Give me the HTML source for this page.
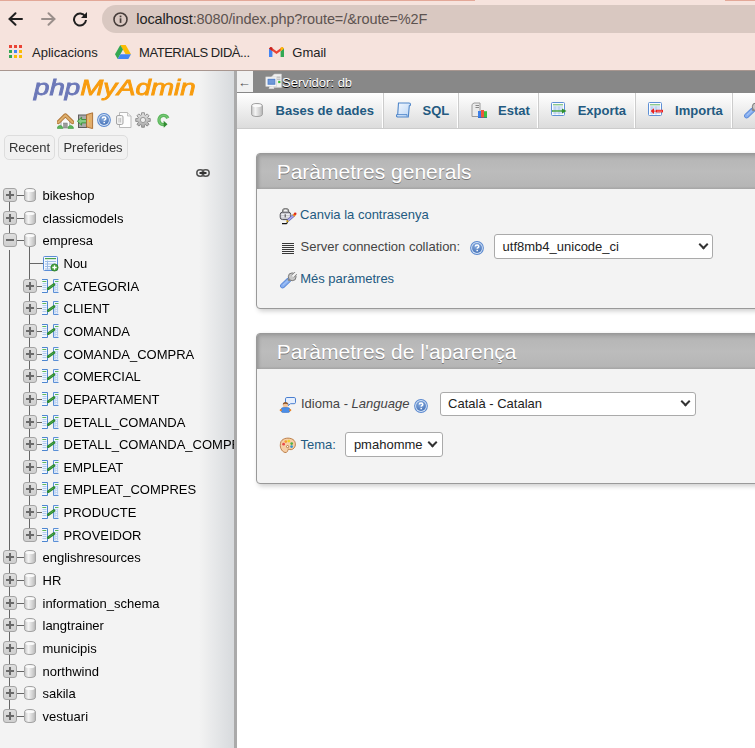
<!DOCTYPE html>
<html><head><meta charset="utf-8">
<style>
*{box-sizing:border-box}
html,body{margin:0;padding:0;width:755px;height:748px;overflow:hidden;background:#fff;font-family:"Liberation Sans",sans-serif}
.a{position:absolute}
#chrome{position:absolute;left:0;top:0;width:755px;height:71px;background:#f6e3dd;border-bottom:1px solid #a8968f}
#omni{position:absolute;left:102px;top:5px;width:680px;height:28px;border-radius:14px;background:#d9c8c1}
.bm{position:absolute;top:44.5px;font-size:13px;color:#222;white-space:nowrap}
#nav{will-change:transform;position:absolute;left:0;top:71px;width:234px;height:677px;background:linear-gradient(to right,#f3f3f3 85%,#d7dadd);overflow:hidden}
#resizer{position:absolute;left:234px;top:71px;width:3px;height:677px;background:#aaa}
.t{position:absolute;font-size:13px;color:#000;white-space:nowrap;line-height:15px}
.lk{color:#235a81}
.exp{position:absolute;width:14px;height:14px;border:1px solid #a4a4a4;border-radius:3px;background:linear-gradient(#dedede,#cfcfcf)}
.exp:before{content:"";position:absolute;left:2px;top:5px;width:8px;height:2px;background:#6a6a6a}
.exp.p:after{content:"";position:absolute;left:5px;top:2px;width:2px;height:8px;background:#6a6a6a}
.vl{position:absolute;width:1px;background:#666}
.hl{position:absolute;height:1px;background:#666}
#main{position:absolute;left:237px;top:71px;width:518px;height:677px;background:#fff;overflow:hidden}
.btn{position:absolute;height:25px;border:1px solid #ddd;border-radius:5px;background:#f1f1f1;font-size:13px;line-height:15px;padding-top:3.6px;text-align:center;color:#333;white-space:nowrap}
.tab{position:absolute;top:32.1px;font-size:13px;line-height:15px;font-weight:700;color:#235a81;white-space:nowrap}
.grp{position:absolute;width:600px;border:1px solid #999;border-radius:4px;background:#f3f3f3;box-shadow:2px 2px 5px #ccc;overflow:hidden}
.gh{height:35px;background:linear-gradient(#a9a9a9,#b7b7b7 18%,#bcbcbc 50%,#b6b6b6 92%,#a8a8a8);box-shadow:inset 2px 1px 3px #999;color:#fff;font-size:21px;line-height:24px;padding:6.3px 0 0 19.7px;text-shadow:0 1px 0 #777;white-space:nowrap}
.sel{position:absolute;border:1px solid #aaa;border-radius:3px;background:#fff;font-size:13px;line-height:15px;color:#222;white-space:nowrap}
.sel span{position:absolute;left:7.6px;top:3.4px}
.sel i{position:absolute;right:4px;top:8.5px;width:10px;height:6px}
.sel i:before{content:"";position:absolute;left:1.5px;top:-3px;width:5px;height:5px;border-right:2px solid #333;border-bottom:2px solid #333;transform:rotate(45deg)}

</style></head><body>
<svg width="0" height="0" style="position:absolute">
<defs>
<linearGradient id="dbg" x1="0" x2="1" y1="0" y2="0"><stop offset="0" stop-color="#c8c8c8"/><stop offset="0.35" stop-color="#f4f4f4"/><stop offset="1" stop-color="#b9b9b9"/></linearGradient>
<symbol id="dbicon" viewBox="0 0 12 14"><path d="M0.6 2.6C0.6 1.3 3 0.5 6 0.5s5.4 0.8 5.4 2.1v8.8c0 1.3-2.4 2.1-5.4 2.1s-5.4-0.8-5.4-2.1z" fill="url(#dbg)" stroke="#a0a0a0" stroke-width="1"/><ellipse cx="6" cy="2.7" rx="4.6" ry="1.4" fill="#fafafa"/></symbol>
<symbol id="tblicon" viewBox="0 0 17 14">
 <path d="M0.5 4.2v8.5" stroke="#b4cdef" stroke-width="1"/>
 <path d="M0 0.5h5.5v13H0" fill="#f4f8fe" stroke="#4d86d0" stroke-width="1"/>
 <path d="M16.5 0.5h-5v13h5" fill="#eef4fd" stroke="#5a8fd6" stroke-width="1"/>
 <rect x="0.3" y="2" width="4" height="1" fill="#5cb85c"/><rect x="13" y="2" width="3.5" height="1" fill="#5cb85c"/>
 <path d="M0.5 4.6h4M0.5 6.6h4M0.5 8.6h4M0.5 10.6h4" stroke="#a9c5ec" stroke-width="1"/>
 <rect x="12.3" y="4" width="3.8" height="8.5" fill="#b9d0ef"/>
 <path d="M13.6 5.3h1.3M13.6 7.3h1.3M13.6 9.3h1.3M13.6 11.3h1.3" stroke="#fff" stroke-width="1"/>
 <path d="M6.3 9.6l5.6-4" stroke="#2d8a2d" stroke-width="2.8" stroke-linecap="round"/>
 <path d="M6.8 9.2l4.6-3.3" stroke="#6cc06c" stroke-width="0.6"/>
</symbol>
<symbol id="newicon" viewBox="0 0 17 16">
 <rect x="1.5" y="0.5" width="14" height="14" rx="1" fill="#f3f7fd" stroke="#5b8dd6" stroke-width="1"/>
 <rect x="3" y="2" width="11" height="1.2" fill="#4aa34a"/>
 <path d="M3 5.5h11M3 8h11M3 10.5h11M3 13h8M5.5 4.5v9" stroke="#9dbce8" stroke-width="1"/>
 <circle cx="12.5" cy="11.5" r="3.6" fill="#46a23c" stroke="#2a7a22" stroke-width="0.7"/><path d="M12.5 9.3v4.4M10.3 11.5h4.4" stroke="#fff" stroke-width="1.3"/>
</symbol>
</defs></svg>
<svg width="0" height="0" style="position:absolute">
<defs>
<linearGradient id="sqlg" x1="0" y1="0" x2="1" y2="1"><stop offset="0" stop-color="#f5f9ff"/><stop offset="1" stop-color="#b8d4f5"/></linearGradient>
<symbol id="ti_db" viewBox="0 0 16 16"><g transform="translate(2,1)"><path d="M0.6 2.6C0.6 1.3 3 0.5 6 0.5s5.4 0.8 5.4 2.1v8.8c0 1.3-2.4 2.1-5.4 2.1s-5.4-0.8-5.4-2.1z" fill="url(#dbg)" stroke="#a0a0a0" stroke-width="1"/><ellipse cx="6" cy="2.7" rx="4.6" ry="1.4" fill="#fafafa"/></g></symbol>
<symbol id="ti_sql" viewBox="0 0 16 16">
 <path d="M2.5 1h10.5c1 0 1.5.6 1.5 1.4 0 .8-.6 1.3-1.2 1.3L12.3 15H2c-1 0-1.6-.6-1.6-1.3 0-.6.5-1.2 1.3-1.2z" fill="url(#sqlg)" stroke="#4f86c9" stroke-width="1.1"/>
 <path d="M1.5 12.6h9.5v1.8" fill="none" stroke="#4f86c9" stroke-width="0.9"/>
</symbol>
<symbol id="ti_stat" viewBox="0 0 16 16">
 <path d="M1 2.5l2-1.5h6v12.5l-2 1H1z" fill="#eaeaea" stroke="#9a9a9a" stroke-width="1"/>
 <rect x="4.5" y="3" width="3.5" height="1" fill="#888"/><rect x="4.5" y="5" width="3.5" height="1" fill="#888"/>
 <rect x="7" y="9" width="3" height="7" fill="#3b7ee8"/><rect x="10" y="8" width="3" height="8" fill="#f0563a"/><rect x="13" y="9.2" width="3" height="6.8" fill="#3fbf3f"/><rect x="7" y="15.2" width="9" height="0.8" fill="#1f5fb0" opacity="0.6"/>
</symbol>
<symbol id="ti_exp" viewBox="0 0 16 16">
 <rect x="0.5" y="0.5" width="13" height="13" rx="1" fill="#fafcff" stroke="#5e90d6" stroke-width="1"/>
 <rect x="2" y="2.3" width="10" height="1" fill="#5fb35f"/>
 <path d="M2 5h10M2 7h10M2 11h10M4 4.5v8M8 4.5v8" stroke="#a7c3ea" stroke-width="0.9"/>
 <path d="M1 8.3h10v-1.8l4.5 2.5-4.5 2.5v-1.8H1z" fill="#2f8f2f"/>
 <rect x="2" y="8.7" width="8" height="0.7" fill="#8fd08f"/>
</symbol>
<symbol id="ti_imp" viewBox="0 0 16 16">
 <rect x="0.5" y="0.5" width="13" height="13" rx="1" fill="#fafcff" stroke="#5e90d6" stroke-width="1"/>
 <rect x="2" y="2.3" width="10" height="1" fill="#5fb35f"/>
 <path d="M2 5h10M2 7h10M2 11h10M4 4.5v8M8 4.5v8" stroke="#a7c3ea" stroke-width="0.9"/>
 <rect x="8" y="7.8" width="7" height="2.6" fill="#e82020"/>
 <path d="M2.5 9.1L6 6.3v5.6z" fill="#e82020"/><rect x="5" y="8.6" width="4" height="1" fill="#e82020"/>
 <rect x="9" y="8.7" width="5" height="0.8" fill="#ff9a9a"/>
</symbol>
<symbol id="ti_wr" viewBox="0 0 16 16">
 <path d="M1.5 12.5l6-6 2 2-6 6c-.8.8-1.3.8-2 .1s-.8-1.3 0-2.1z" fill="#6d9ee8" stroke="#4e84d8" stroke-width="0.8"/>
 <path d="M8 6.5c-1-2 0-5 3-5.5l-1.5 2.2 1.2 1.8 2.2-.2 1.2-2c.8 3-1.5 5.5-4.4 5" fill="#ccc" stroke="#777" stroke-width="0.8"/>
</symbol>
</defs></svg>
<svg width="0" height="0" style="position:absolute">
<defs>
<radialGradient id="hg2" cx="0.45" cy="0.3" r="0.8"><stop offset="0" stop-color="#8db0e2"/><stop offset="1" stop-color="#3f6cb2"/></radialGradient>
<symbol id="helpicon" viewBox="0 0 14 14">
 <circle cx="7" cy="7" r="6.9" fill="#5a88cf"/>
 <circle cx="7" cy="7" r="5.9" fill="#d3e2f6"/>
 <circle cx="7" cy="7" r="4.9" fill="url(#hg2)"/>
 <path d="M5.3 5.5c0-1 .8-1.6 1.75-1.6s1.75.6 1.75 1.5c0 1.15-1.55 1.15-1.55 2.3" fill="none" stroke="#fff" stroke-width="1.45"/>
 <rect x="6.45" y="8.9" width="1.5" height="1.35" fill="#fff"/>
</symbol>
<symbol id="ti_wr2" viewBox="0 0 17 17">
 <path d="M2.6 13.8L8.6 8.2" stroke="#5a88d6" stroke-width="5" stroke-linecap="round"/>
 <path d="M2.6 13.8L8.6 8.2" stroke="#86aef0" stroke-width="3.4" stroke-linecap="round"/>
 <path d="M3.2 13L8 8.6" stroke="#b8d0f6" stroke-width="0.8" stroke-linecap="round"/>
 <path d="M8.2 8.6L10.6 6.2" stroke="#8a8a8a" stroke-width="2.6"/>
 <circle cx="12.2" cy="4.8" r="3.9" fill="#c8c8c8" stroke="#7a7a7a" stroke-width="1"/>
 <path d="M12.6 4.4L17 0" stroke="#7a7a7a" stroke-width="3.6"/>
 <path d="M12.4 4.6L17.5 -0.5" stroke="#f3f3f3" stroke-width="2.2"/>
</symbol>
</defs></svg>

<div id="chrome">
  <div class="a" style="left:0;top:0;width:475px;height:1px;background:#e3a898"></div>
  <div class="a" style="left:725px;top:0;width:30px;height:1px;background:#e3a898"></div>
  <!-- back -->
  <svg class="a" style="left:7.2px;top:11px" width="16" height="16" viewBox="0 0 16 16"><path d="M15 8H2.5M8.5 2.2L2.5 8l6 5.8" fill="none" stroke="#1f1f1f" stroke-width="2" stroke-linecap="round"/></svg>
  <svg class="a" style="left:40.8px;top:11px" width="16" height="16" viewBox="0 0 16 16"><path d="M1 8h12.5M7.5 2.2l6 5.8-6 5.8" fill="none" stroke="#9a8f8b" stroke-width="2" stroke-linecap="round"/></svg>
  <svg class="a" style="left:72px;top:11px" width="16" height="16" viewBox="0 0 16 16"><path d="M13.2 5.5A6 6 0 1 0 14 9" fill="none" stroke="#1f1f1f" stroke-width="2"/><path d="M15 1v6H9z" fill="#1f1f1f"/></svg>
  <div id="omni">
    <svg class="a" style="left:11px;top:7px" width="15" height="15" viewBox="0 0 15 15"><circle cx="7.5" cy="7.5" r="6.5" fill="none" stroke="#463d3a" stroke-width="1.6"/><rect x="6.7" y="6.3" width="1.7" height="4.6" fill="#463d3a"/><rect x="6.7" y="3.6" width="1.7" height="1.7" fill="#463d3a"/></svg>
    <div class="a" style="left:34.3px;top:5.8px;font-size:14.5px;line-height:16px;color:#1f1f1f;white-space:nowrap;letter-spacing:-0.1px">localhost<span style="color:#5d5350">:8080/index.php?route=/&amp;route=%2F</span></div>
  </div>
  <!-- apps grid -->
  <svg class="a" style="left:9px;top:45px" width="13" height="13" viewBox="0 0 13 13">
    <rect x="0" y="0" width="3" height="3" fill="#ea4335"/><rect x="5" y="0" width="3" height="3" fill="#ea4335"/><rect x="10" y="0" width="3" height="3" fill="#ea4335"/>
    <rect x="0" y="5" width="3" height="3" fill="#34a853"/><rect x="5" y="5" width="3" height="3" fill="#4285f4"/><rect x="10" y="5" width="3" height="3" fill="#fbbc04"/>
    <rect x="0" y="10" width="3" height="3" fill="#34a853"/><rect x="5" y="10" width="3" height="3" fill="#fbbc04"/><rect x="10" y="10" width="3" height="3" fill="#fbbc04"/>
  </svg>
  <div class="bm" style="left:32px">Aplicacions</div>
  <svg class="a" style="left:115px;top:45px" width="16" height="14" viewBox="0 0 16 14"><path d="M5.3 0h5.4L16 9.2h-5.4z" fill="#fbbc04"/><path d="M5.3 0L0 9.2l2.7 4.8L8 4.6z" fill="#34a853"/><path d="M2.7 14h10.6L16 9.2H5.4z" fill="#4285f4"/></svg>
  <div class="bm" style="left:139px;letter-spacing:-0.45px">MATERIALS DIDÀ...</div>
  <svg class="a" style="left:269px;top:46.8px" width="15" height="11" viewBox="0 0 15 11"><path d="M0 1.5v8.5h3.4V4.2z" fill="#4285f4"/><path d="M11.6 4.2V10H15V1.5z" fill="#34a853"/><path d="M0 1.5L7.5 7 15 1.5 13.3 0 7.5 4.3 1.7 0z" fill="#ea4335"/><path d="M15 1.5L11.6 4.2V0.6l1.7-.6z" fill="#fbbc04"/><path d="M0 1.5l3.4 2.7V0.6L1.7 0z" fill="#c5221f"/></svg>
  <div class="bm" style="left:292.3px">Gmail</div>
</div>

<div id="nav">
<div class="a" style="left:33.5px;top:3.2px;font-size:22.6px;line-height:28px;font-weight:400;font-style:italic;-webkit-text-stroke:0.85px currentColor;white-space:nowrap;transform:scaleX(1.225);transform-origin:0 0"><span style="color:#6c78b8">php</span><span style="color:#f89c0e">MyAdmin</span></div>
<!-- home -->
<svg class="a" style="left:57px;top:41.5px" width="17" height="16" viewBox="0 0 17 16">
 <rect x="3.6" y="7.5" width="9.6" height="7.5" fill="#fcfcfc"/>
 <path d="M4 8v7M12.8 8v7" stroke="#9a9a9a" stroke-width="0.9"/>
 <rect x="6.6" y="10" width="3.6" height="5" fill="#9c9c9c" stroke="#777" stroke-width="0.5"/>
 <path d="M1.3 9.2L8.4 2.2l7.1 7" fill="none" stroke="#b07434" stroke-width="3.8" stroke-linecap="round" stroke-linejoin="round"/>
 <path d="M1.3 9.2L8.4 2.2l7.1 7" fill="none" stroke="#dcae6c" stroke-width="2" stroke-linecap="round" stroke-linejoin="round"/>
 <path d="M0.3 15.4c0-1.8 1.2-2.8 2.8-2.8s2.6 1 2.8 2.8z" fill="#5cb85c" stroke="#3a903a" stroke-width="0.6"/>
 <path d="M10.9 15.4c0-1.8 1.2-2.8 2.8-2.8s2.6 1 2.8 2.8z" fill="#5cb85c" stroke="#3a903a" stroke-width="0.6"/>
</svg>
<!-- exit -->
<svg class="a" style="left:77px;top:41px" width="17" height="17" viewBox="0 0 17 17">
 <rect x="1.5" y="3" width="8" height="12.5" fill="#aaaaaa" stroke="#5e5e5e" stroke-width="1"/>
 <path d="M0.4 9.2L4.6 5.2v2.3h5v3.4h-5v2.3z" fill="#86cc86" stroke="#2a8a2a" stroke-width="0.8"/>
 <path d="M9.6 2.6L15.6 0.8v15.8l-6-1.6z" fill="#e2ad6c" stroke="#a96a2b" stroke-width="0.9"/>
 <path d="M11 4v9.6" stroke="#f3d2a0" stroke-width="0.6"/>
 <circle cx="12.6" cy="9" r="0.8" fill="#ffd600"/>
</svg>
<!-- help -->
<svg class="a" style="left:97px;top:42px" width="14" height="14"><use href="#helpicon"/></svg>
<!-- docs -->
<svg class="a" style="left:116px;top:41px" width="16" height="16" viewBox="0 0 16 16">
 <path d="M3.5 0.5h8l3.5 3.5v11.5h-11.5z" fill="#fdfdfd" stroke="#b9b9b9" stroke-width="1"/>
 <path d="M11.5 0.5v3.5h3.5" fill="#eee" stroke="#b9b9b9" stroke-width="0.8"/>
 <rect x="0.5" y="3.5" width="6.5" height="9" rx="1.5" fill="#f2f2f2" stroke="#a5a5a5" stroke-width="1"/>
 <path d="M3 6v4.5M4.6 6v4.5" stroke="#c2c2c2" stroke-width="1"/>
</svg>
<!-- gear -->
<svg class="a" style="left:135px;top:41px" width="16" height="16" viewBox="0 0 16 16">
 <defs><linearGradient id="gg" x1="0" y1="0" x2="0" y2="1"><stop offset="0" stop-color="#e4e4e4"/><stop offset="1" stop-color="#a8a8a8"/></linearGradient></defs>
 <path d="M13.22 6.60 L15.26 6.59 L15.26 9.41 L13.22 9.40 L12.68 10.70 L14.13 12.14 L12.14 14.13 L10.70 12.68 L9.40 13.22 L9.41 15.26 L6.59 15.26 L6.60 13.22 L5.30 12.68 L3.86 14.13 L1.87 12.14 L3.32 10.70 L2.78 9.40 L0.74 9.41 L0.74 6.59 L2.78 6.60 L3.32 5.30 L1.87 3.86 L3.86 1.87 L5.30 3.32 L6.60 2.78 L6.59 0.74 L9.41 0.74 L9.40 2.78 L10.70 3.32 L12.14 1.87 L14.13 3.86 L12.68 5.30Z" fill="url(#gg)" stroke="#7c7c7c" stroke-width="0.8" stroke-linejoin="round"/>
 <circle cx="8" cy="8" r="2.6" fill="#eeeeee" stroke="#8a8a8a" stroke-width="0.8"/>
</svg>
<!-- reload -->
<svg class="a" style="left:156px;top:113px;top:42px" width="14" height="15" viewBox="0 0 14 15">
 <path d="M11.8 5.2A4.6 4.6 0 1 0 8.2 11.6" fill="none" stroke="#5cb85c" stroke-width="3.4"/>
 <path d="M11.8 5.2A4.6 4.6 0 1 0 8.2 11.6" fill="none" stroke="#8fd08f" stroke-width="1" opacity="0.6"/>
 <path d="M7.6 7.8L11.5 11.2 7.8 14.8z" fill="#2f8a2f"/>
</svg>
<div class="a btn" style="left:4px;top:64px;width:51px">Recent</div>
<div class="a btn" style="left:58px;top:64px;width:70px">Preferides</div>
<!-- link -->
<svg class="a" style="left:196px;top:98px" width="14" height="8" viewBox="0 0 14 8">
 <rect x="0.8" y="0.8" width="7" height="6.4" rx="3.2" fill="none" stroke="#555" stroke-width="1.5"/>
 <rect x="6.2" y="0.8" width="7" height="6.4" rx="3.2" fill="none" stroke="#555" stroke-width="1.5"/>
 <rect x="3.5" y="3" width="7" height="2" fill="#333"/>
</svg>

<div class="vl" style="left:29px;top:176.3px;height:280.45px"></div>
<div class="vl" style="left:9px;top:179.3px;height:458.65px"></div>
<div class="vl" style="left:9px;top:131.0px;height:31.3px"></div>
<div class="exp p" style="left:3px;top:117.0px"></div>
<div class="hl" style="left:17px;top:124.0px;width:7px"></div>
<svg class="a dbi" style="left:24px;top:117.0px" width="12" height="14"><use href="#dbicon"/></svg>
<div class="t" style="left:42.5px;top:117.0px">bikeshop</div>
<div class="exp p" style="left:3px;top:139.65px"></div>
<div class="hl" style="left:17px;top:146.65px;width:7px"></div>
<svg class="a dbi" style="left:24px;top:139.65px" width="12" height="14"><use href="#dbicon"/></svg>
<div class="t" style="left:42.5px;top:139.65px">classicmodels</div>
<div class="exp" style="left:3px;top:162.3px"></div>
<div class="hl" style="left:17px;top:169.3px;width:7px"></div>
<svg class="a dbi" style="left:24px;top:162.3px" width="12" height="14"><use href="#dbicon"/></svg>
<div class="t" style="left:42.5px;top:162.3px">empresa</div>
<div class="hl" style="left:29px;top:192.45px;width:14px"></div>
<svg class="a" style="left:42px;top:184.95px" width="17" height="16"><use href="#newicon"/></svg>
<div class="t" style="left:63.5px;top:184.95px">Nou</div>
<div class="exp p" style="left:23px;top:207.6px"></div>
<div class="hl" style="left:37px;top:214.6px;width:5px"></div>
<svg class="a" style="left:42px;top:207.6px" width="17" height="14"><use href="#tblicon"/></svg>
<div class="t" style="left:63.5px;top:207.6px">CATEGORIA</div>
<div class="exp p" style="left:23px;top:230.25px"></div>
<div class="hl" style="left:37px;top:237.25px;width:5px"></div>
<svg class="a" style="left:42px;top:230.25px" width="17" height="14"><use href="#tblicon"/></svg>
<div class="t" style="left:63.5px;top:230.25px">CLIENT</div>
<div class="exp p" style="left:23px;top:252.9px"></div>
<div class="hl" style="left:37px;top:259.9px;width:5px"></div>
<svg class="a" style="left:42px;top:252.9px" width="17" height="14"><use href="#tblicon"/></svg>
<div class="t" style="left:63.5px;top:252.9px">COMANDA</div>
<div class="exp p" style="left:23px;top:275.55px"></div>
<div class="hl" style="left:37px;top:282.55px;width:5px"></div>
<svg class="a" style="left:42px;top:275.55px" width="17" height="14"><use href="#tblicon"/></svg>
<div class="t" style="left:63.5px;top:275.55px">COMANDA_COMPRA</div>
<div class="exp p" style="left:23px;top:298.2px"></div>
<div class="hl" style="left:37px;top:305.2px;width:5px"></div>
<svg class="a" style="left:42px;top:298.2px" width="17" height="14"><use href="#tblicon"/></svg>
<div class="t" style="left:63.5px;top:298.2px">COMERCIAL</div>
<div class="exp p" style="left:23px;top:320.85px"></div>
<div class="hl" style="left:37px;top:327.85px;width:5px"></div>
<svg class="a" style="left:42px;top:320.85px" width="17" height="14"><use href="#tblicon"/></svg>
<div class="t" style="left:63.5px;top:320.85px">DEPARTAMENT</div>
<div class="exp p" style="left:23px;top:343.5px"></div>
<div class="hl" style="left:37px;top:350.5px;width:5px"></div>
<svg class="a" style="left:42px;top:343.5px" width="17" height="14"><use href="#tblicon"/></svg>
<div class="t" style="left:63.5px;top:343.5px">DETALL_COMANDA</div>
<div class="exp p" style="left:23px;top:366.15px"></div>
<div class="hl" style="left:37px;top:373.15px;width:5px"></div>
<svg class="a" style="left:42px;top:366.15px" width="17" height="14"><use href="#tblicon"/></svg>
<div class="t" style="left:63.5px;top:366.15px">DETALL_COMANDA_COMPRA</div>
<div class="exp p" style="left:23px;top:388.8px"></div>
<div class="hl" style="left:37px;top:395.8px;width:5px"></div>
<svg class="a" style="left:42px;top:388.8px" width="17" height="14"><use href="#tblicon"/></svg>
<div class="t" style="left:63.5px;top:388.8px">EMPLEAT</div>
<div class="exp p" style="left:23px;top:411.45px"></div>
<div class="hl" style="left:37px;top:418.45px;width:5px"></div>
<svg class="a" style="left:42px;top:411.45px" width="17" height="14"><use href="#tblicon"/></svg>
<div class="t" style="left:63.5px;top:411.45px">EMPLEAT_COMPRES</div>
<div class="exp p" style="left:23px;top:434.1px"></div>
<div class="hl" style="left:37px;top:441.1px;width:5px"></div>
<svg class="a" style="left:42px;top:434.1px" width="17" height="14"><use href="#tblicon"/></svg>
<div class="t" style="left:63.5px;top:434.1px">PRODUCTE</div>
<div class="exp p" style="left:23px;top:456.75px"></div>
<div class="hl" style="left:37px;top:463.75px;width:5px"></div>
<svg class="a" style="left:42px;top:456.75px" width="17" height="14"><use href="#tblicon"/></svg>
<div class="t" style="left:63.5px;top:456.75px">PROVEIDOR</div>
<div class="exp p" style="left:3px;top:479.4px"></div>
<div class="hl" style="left:17px;top:486.4px;width:7px"></div>
<svg class="a dbi" style="left:24px;top:479.4px" width="12" height="14"><use href="#dbicon"/></svg>
<div class="t" style="left:42.5px;top:479.4px">englishresources</div>
<div class="exp p" style="left:3px;top:502.05px"></div>
<div class="hl" style="left:17px;top:509.05px;width:7px"></div>
<svg class="a dbi" style="left:24px;top:502.05px" width="12" height="14"><use href="#dbicon"/></svg>
<div class="t" style="left:42.5px;top:502.05px">HR</div>
<div class="exp p" style="left:3px;top:524.7px"></div>
<div class="hl" style="left:17px;top:531.7px;width:7px"></div>
<svg class="a dbi" style="left:24px;top:524.7px" width="12" height="14"><use href="#dbicon"/></svg>
<div class="t" style="left:42.5px;top:524.7px">information_schema</div>
<div class="exp p" style="left:3px;top:547.35px"></div>
<div class="hl" style="left:17px;top:554.35px;width:7px"></div>
<svg class="a dbi" style="left:24px;top:547.35px" width="12" height="14"><use href="#dbicon"/></svg>
<div class="t" style="left:42.5px;top:547.35px">langtrainer</div>
<div class="exp p" style="left:3px;top:570.0px"></div>
<div class="hl" style="left:17px;top:577.0px;width:7px"></div>
<svg class="a dbi" style="left:24px;top:570.0px" width="12" height="14"><use href="#dbicon"/></svg>
<div class="t" style="left:42.5px;top:570.0px">municipis</div>
<div class="exp p" style="left:3px;top:592.65px"></div>
<div class="hl" style="left:17px;top:599.65px;width:7px"></div>
<svg class="a dbi" style="left:24px;top:592.65px" width="12" height="14"><use href="#dbicon"/></svg>
<div class="t" style="left:42.5px;top:592.65px">northwind</div>
<div class="exp p" style="left:3px;top:615.3px"></div>
<div class="hl" style="left:17px;top:622.3px;width:7px"></div>
<svg class="a dbi" style="left:24px;top:615.3px" width="12" height="14"><use href="#dbicon"/></svg>
<div class="t" style="left:42.5px;top:615.3px">sakila</div>
<div class="exp p" style="left:3px;top:637.95px"></div>
<div class="hl" style="left:17px;top:644.95px;width:7px"></div>
<svg class="a dbi" style="left:24px;top:637.95px" width="12" height="14"><use href="#dbicon"/></svg>
<div class="t" style="left:42.5px;top:637.95px">vestuari</div>
</div>
<div id="resizer"></div>
<div id="main">
<!-- breadcrumb -->
<div class="a" style="left:0;top:0;width:518px;height:22px;background:#888"></div>
<div class="a" style="left:0;top:0;width:16px;height:21px;background:#f1f1f1"></div>
<div class="a" style="left:0.8px;top:4px;font-size:13px;line-height:15px;color:#555">&#8592;</div>
<svg class="a" style="left:28px;top:1px" width="17.5" height="18.5" viewBox="0 0 17 18">
 <path d="M6.5 4.5L9 2h7v13H6.5z" fill="#f2f2f2" stroke="#c8c8c8" stroke-width="0.6"/>
 <path d="M11.5 5h3.5M11.5 7h3.5" stroke="#999" stroke-width="0.8"/>
 <rect x="12.8" y="8.6" width="2.2" height="2.2" fill="#3cbb3c"/>
 <rect x="0.8" y="4.8" width="10.6" height="9.2" fill="#f6f6f6" stroke="#d0d0d0" stroke-width="0.6"/>
 <rect x="2.5" y="6.6" width="7.5" height="5.8" fill="#4f7fc9"/>
 <rect x="3.3" y="7.4" width="6" height="4" fill="#6f98d8"/>
 <path d="M4.5 14h3.5l1 2.2H3.5z" fill="#eee"/>
</svg>
<div class="a" style="left:45px;top:3.6px;font-size:13px;line-height:15px;color:#fff;text-shadow:0 1px 0 #000;white-space:nowrap">Servidor: db</div>
<!-- tabs -->
<div class="a" style="left:0;top:22px;width:518px;height:36px;background:linear-gradient(#fff,#dcdcdc);border-bottom:1px solid #ccc"></div>

<div class="a" style="left:145px;top:22px;width:1px;height:35px;background:#fff"></div>
<div class="a" style="left:146px;top:22px;width:1px;height:35px;background:#ccc"></div>
<svg class="a" style="left:12px;top:31px" width="16" height="16"><use href="#ti_db"/></svg>
<div class="a tab" style="left:38.6px">Bases de dades</div>
<div class="a" style="left:220px;top:22px;width:1px;height:35px;background:#fff"></div>
<div class="a" style="left:221px;top:22px;width:1px;height:35px;background:#ccc"></div>
<svg class="a" style="left:159px;top:31px" width="16" height="16"><use href="#ti_sql"/></svg>
<div class="a tab" style="left:185.5px">SQL</div>
<div class="a" style="left:300px;top:22px;width:1px;height:35px;background:#fff"></div>
<div class="a" style="left:301px;top:22px;width:1px;height:35px;background:#ccc"></div>
<svg class="a" style="left:234px;top:31px" width="16" height="16"><use href="#ti_stat"/></svg>
<div class="a tab" style="left:261px">Estat</div>
<div class="a" style="left:397px;top:22px;width:1px;height:35px;background:#fff"></div>
<div class="a" style="left:398px;top:22px;width:1px;height:35px;background:#ccc"></div>
<svg class="a" style="left:314px;top:31px" width="16" height="16"><use href="#ti_exp"/></svg>
<div class="a tab" style="left:340.7px">Exporta</div>
<div class="a" style="left:494px;top:22px;width:1px;height:35px;background:#fff"></div>
<div class="a" style="left:495px;top:22px;width:1px;height:35px;background:#ccc"></div>
<svg class="a" style="left:411px;top:31px" width="16" height="16"><use href="#ti_imp"/></svg>
<div class="a tab" style="left:438.1px">Importa</div>
<svg class="a" style="left:506.5px;top:30.7px" width="17" height="17"><use href="#ti_wr2"/></svg>
<!-- group 1 -->
<div class="grp" style="left:19px;top:82px;height:156px">
 <div class="gh">Paràmetres generals</div>
</div>
<svg class="a" style="left:42px;top:136px" width="18" height="18" viewBox="0 0 18 18">
 <path d="M3.6 5.5V4.6a3 3 0 0 1 6 0v0.9" fill="none" stroke="#555" stroke-width="1.3"/>
 <path d="M3.6 5.5V4.6a3 3 0 0 1 6 0v0.9" fill="none" stroke="#ddd" stroke-width="0.4"/>
 <rect x="1.2" y="5.2" width="10.6" height="7.4" rx="2.4" fill="#c9c9cf" stroke="#4e4e55" stroke-width="1"/>
 <path d="M2.4 7.6h8.2M2.4 9.8h8.2" stroke="#f4f4f8" stroke-width="1"/>
 <path d="M6.2 7.2v3.2" stroke="#333" stroke-width="0.9"/>
 <path d="M8.6 13.8l6.4-5.6" stroke="#5a5aa8" stroke-width="2.8"/>
 <path d="M8.6 13.8l6.4-5.6" stroke="#a6a6f0" stroke-width="1.6"/>
 <path d="M14.3 8.8l1.8-1.6" stroke="#f08a20" stroke-width="2.6"/>
 <circle cx="16.2" cy="6.8" r="1.3" fill="#e02818"/>
 <path d="M7.6 14.8l1.6-1.4" stroke="#c89a10" stroke-width="2"/>
 <path d="M3 16.6h4.3l1.3-1.2" fill="none" stroke="#111" stroke-width="1.2"/>
</svg>
<div class="t lk" style="left:63.1px;top:136.3px">Canvia la contrasenya</div>
<svg class="a" style="left:45px;top:170.8px" width="12" height="12" viewBox="0 0 12 12">
 <path d="M0 1.5h12M0 3.5h12M0 5.5h12M0 7.5h12M0 9.5h12M0 11.5h12" stroke="#222" stroke-width="0.9"/>
</svg>
<div class="t" style="left:63.5px;top:168.2px;color:#444">Server connection collation:</div>
<svg class="a" style="left:232.8px;top:170px" width="14" height="14"><use href="#helpicon"/></svg>
<div class="sel" style="left:257px;top:163.4px;width:219px;height:24.2px"><span>utf8mb4_unicode_ci</span><i></i></div>
<svg class="a" style="left:43px;top:200.5px" width="17" height="17"><use href="#ti_wr2"/></svg>
<div class="t lk" style="left:63.2px;top:200.1px">Més paràmetres</div>

<!-- group 2 -->
<div class="grp" style="left:19px;top:262px;height:151px">
 <div class="gh">Paràmetres de l'aparença</div>
</div>
<svg class="a" style="left:42px;top:324px" width="18" height="18" viewBox="0 0 18 18">
 <path d="M7.8 2.5h7.4c.8 0 1.3.5 1.3 1.3v3.6c0 .8-.5 1.3-1.3 1.3h-3.7l-2.4 2v-2H7.8c-.8 0-1.3-.5-1.3-1.3V3.8c0-.8.5-1.3 1.3-1.3z" fill="#e6effd" stroke="#4a7fcf" stroke-width="1"/>
 <circle cx="6.4" cy="10.2" r="2.5" fill="#f2c49a"/>
 <path d="M3.8 9.8c0-2 1.2-2.8 2.6-2.8s2.7 .8 2.7 2.6c-.6-.6-1.6-.9-2.7-.9s-2 .4-2.6 1.1z" fill="#8a5228"/>
 <rect x="2.2" y="12.6" width="8.6" height="5" rx="2" fill="#4a8ee8" stroke="#2f6ac0" stroke-width="0.6"/>
 <circle cx="1.8" cy="15.2" r="1.1" fill="#e8862a"/><circle cx="11.2" cy="15.2" r="1.1" fill="#e8862a"/>
</svg>
<div class="t" style="left:64px;top:325.2px;color:#444">Idioma - <i>Language</i></div>
<svg class="a" style="left:177px;top:327.5px" width="14" height="14"><use href="#helpicon"/></svg>
<div class="sel" style="left:202.5px;top:320.5px;width:256.3px;height:24px"><span>Català - Catalan</span><i></i></div>
<svg class="a" style="left:42px;top:366px" width="18" height="17" viewBox="0 0 18 17">
 <path d="M2 4.5C4 1 10 0 14 2.5c3 2 3 6.5 1 8.5-1.5 2-4 2-5.5 1-1 1.5-1 4-3.5 3.5C2.5 14.5 0 10 2 4.5z" fill="#f6cfa6" stroke="#b5763e" stroke-width="0.9"/>
 <circle cx="4.6" cy="7.2" r="1.35" fill="#e84848"/><circle cx="6.8" cy="4.6" r="1.35" fill="#f5a030"/><circle cx="9.8" cy="4.1" r="1.35" fill="#f2d22e"/>
 <circle cx="12.7" cy="6.6" r="1.35" fill="#52b043"/><circle cx="12.6" cy="9.6" r="1.35" fill="#2f95cf"/>
 <circle cx="8.6" cy="9.6" r="1.1" fill="#fff" stroke="#a8682e" stroke-width="0.8"/>
</svg>
<div class="t lk" style="left:63.5px;top:366.3px">Tema:</div>
<div class="sel" style="left:108.3px;top:361.4px;width:97.3px;height:24.2px"><span>pmahomme</span><i></i></div>

</div>
</body></html>
